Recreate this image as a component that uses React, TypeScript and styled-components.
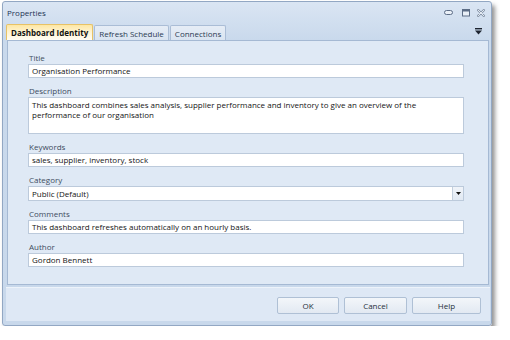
import React from "react";
import styled, { createGlobalStyle } from "styled-components";

const Global = createGlobalStyle`
  html, body { margin: 0; padding: 0; background: #ffffff; }
  body { font-family: "Open Sans", "Noto Sans", sans-serif; font-size: 8px; color: #1b1b1b; }
  * { box-sizing: border-box; }
`;

const Window = styled.div`
  margin: 1px 0 0 2px;
  width: 490px;
  height: 325px;
  display: flex;
  flex-direction: column;
  border: 1px solid #92a7c3;
  border-radius: 3px;
  background: linear-gradient(#dae5f3, #c9d9ec 38px, #c8d8eb);
  box-shadow: 3px 4px 4px rgba(60, 60, 60, 0.55);
`;

const TitleBar = styled.div`
  height: 21px;
  display: flex;
  align-items: center;
  justify-content: space-between;
  padding: 0 6px 0 4px;
`;

const Caption = styled.div`
  color: #1e3453;
`;

const Controls = styled.div`
  display: flex;
  gap: 7px;
  align-items: center;
`;

const ControlSlot = styled.div<{ $extra?: number }>`
  display: flex;
  margin-right: ${(p) => p.$extra ?? 0}px;
`;

const TabRow = styled.div`
  height: 17px;
  display: flex;
  align-items: flex-end;
  padding: 0 9px 0 3px;
`;

const Tab = styled.div<{ $active?: boolean }>`
  height: ${(p) => (p.$active ? 16 : 15)}px;
  display: flex;
  align-items: center;
  padding: 0 4px;
  margin-right: 1px;
  font-weight: ${(p) => (p.$active ? 700 : 400)};
  color: ${(p) => (p.$active ? "#111" : "#2b3b52")};
  border: 1px solid ${(p) => (p.$active ? "#e7c266" : "#aabdd6")};
  border-bottom: none;
  border-radius: 2px 2px 0 0;
  background: ${(p) =>
    p.$active
      ? "linear-gradient(#fde7a4, #fff3cf 45%, #fffdf5)"
      : "linear-gradient(#e6edf6, #d9e4f1)"};
`;

const Spacer = styled.div`
  flex: 1;
`;

const MenuIcon = styled.div`
  align-self: center;
  display: flex;
`;

const Panel = styled.div`
  margin: 0 2px 0 4px;
  height: 245px;
  background: #dfe9f5;
  border: 1px solid #a5b9d3;
  padding: 11px 24px 0 20px;
  display: flex;
  flex-direction: column;
`;

const Field = styled.div`
  display: flex;
  flex-direction: column;
  margin-bottom: 7px;
`;

const Label = styled.div`
  line-height: 11px;
  margin: 0 0 1px 1px;
  color: #3e4c60;
`;

const Input = styled.div<{ $h?: number }>`
  height: ${(p) => p.$h ?? 14}px;
  background: #ffffff;
  border: 1px solid #bccadb;
  padding: 0 3px;
  line-height: ${(p) => (p.$h && p.$h > 20 ? "10px" : `${(p.$h ?? 14) - 2}px`)};
  padding-top: ${(p) => (p.$h && p.$h > 20 ? 2 : 0)}px;
  color: #141414;
  position: relative;
`;

const SelectButton = styled.div`
  position: absolute;
  right: 0;
  top: 0;
  width: 11px;
  height: 13px;
  border-left: 1px solid #c3cfdd;
  background: linear-gradient(#f0f4f9, #e1e9f3);
  display: flex;
  align-items: center;
  justify-content: center;
`;

const Footer = styled.div`
  flex: 1;
  margin: 2px 1px 4px 3px;
  background: #dee8f5;
  border-top: 1px solid #edf3fa;
  display: flex;
  justify-content: flex-end;
  align-items: flex-start;
  gap: 5px;
  padding: 9px 9px 0 0;
`;

const Button = styled.div<{ $w: number }>`
  width: ${(p) => p.$w}px;
  height: 17px;
  display: flex;
  align-items: center;
  justify-content: center;
  border: 1px solid #afc0d5;
  border-radius: 2px;
  background: linear-gradient(#f3f6fa, #e2e9f2);
  color: #262f3b;
`;

const Minimize = () => (
  <svg width="9" height="9" viewBox="0 0 9 9">
    <rect x="0.5" y="2.5" width="8" height="4" rx="2" fill="#e9eff7" stroke="#5c6d86" />
  </svg>
);

const Restore = () => (
  <svg width="8" height="8" viewBox="0 0 8 8">
    <rect x="0.5" y="0.5" width="7" height="6.5" fill="#e9eff7" stroke="#5c6d86" />
    <rect x="1" y="1" width="6" height="1.5" fill="#5c6d86" />
  </svg>
);

const Close = () => (
  <svg width="8" height="8" viewBox="0 0 8 8">
    <path d="M1 1 L7 7 M7 1 L1 7" stroke="#8896aa" strokeWidth="2.4" strokeLinecap="round" />
    <path d="M1 1 L7 7 M7 1 L1 7" stroke="#eef3f9" strokeWidth="0.9" strokeLinecap="round" />
  </svg>
);

const Customize = () => (
  <svg width="7" height="7" viewBox="0 0 7 7">
    <rect x="0" y="0" width="7" height="1.4" fill="#1d2430" />
    <path d="M0 2.6 L7 2.6 L3.5 6.4 Z" fill="#1d2430" />
  </svg>
);

const Arrow = () => (
  <svg width="5" height="3" viewBox="0 0 5 3">
    <path d="M0 0 L5 0 L2.5 3 Z" fill="#111" />
  </svg>
);

export default function App() {
  return (
    <>
      <Global />
      <Window>
        <TitleBar>
          <Caption>Properties</Caption>
          <Controls>
            <ControlSlot $extra={2}>
              <Minimize />
            </ControlSlot>
            <ControlSlot>
              <Restore />
            </ControlSlot>
            <ControlSlot>
              <Close />
            </ControlSlot>
          </Controls>
        </TitleBar>
        <TabRow>
          <Tab $active>Dashboard Identity</Tab>
          <Tab>Refresh Schedule</Tab>
          <Tab>Connections</Tab>
          <Spacer />
          <MenuIcon>
            <Customize />
          </MenuIcon>
        </TabRow>
        <Panel>
          <Field>
            <Label>Title</Label>
            <Input>Organisation Performance</Input>
          </Field>
          <Field>
            <Label>Description</Label>
            <Input $h={37}>
              This dashboard combines sales analysis, supplier performance and inventory to give an overview of the
              <br />
              performance of our organisation
            </Input>
          </Field>
          <Field>
            <Label>Keywords</Label>
            <Input>sales, supplier, inventory, stock</Input>
          </Field>
          <Field>
            <Label>Category</Label>
            <Input $h={15}>
              Public (Default)
              <SelectButton>
                <Arrow />
              </SelectButton>
            </Input>
          </Field>
          <Field>
            <Label>Comments</Label>
            <Input>This dashboard refreshes automatically on an hourly basis.</Input>
          </Field>
          <Field>
            <Label>Author</Label>
            <Input>Gordon Bennett</Input>
          </Field>
        </Panel>
        <Footer>
          <Button $w={62}>OK</Button>
          <Button $w={63}>Cancel</Button>
          <Button $w={69}>Help</Button>
        </Footer>
      </Window>
    </>
  );
}
